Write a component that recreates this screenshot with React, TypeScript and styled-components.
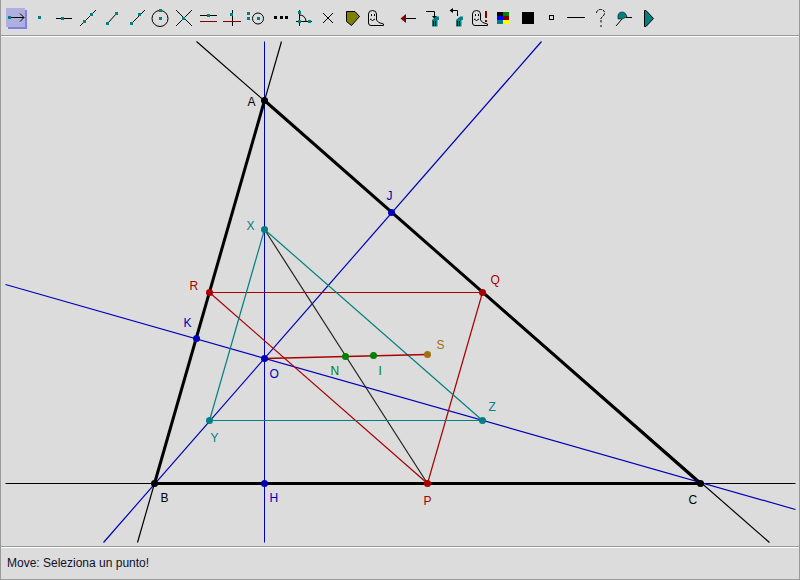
import styled, { createGlobalStyle } from "styled-components";
import { ReactNode } from "react";

const Teal = "#008080";
const Wine = "#800000";
const Blue = "#0000b8";
const Red = "#a80000";
const Green = "#008000";
const Brown = "#a07010";

const GlobalStyle = createGlobalStyle`
  html, body {
    margin: 0;
    padding: 0;
    background: #dcdcdc;
  }
  body {
    font-family: "Liberation Sans", Arial, sans-serif;
  }
`;

const Page = styled.div`
  width: 800px;
  height: 580px;
  box-sizing: border-box;
  display: flex;
  flex-direction: column;
  background: #dcdcdc;
  border-left: 1px solid #999;
  border-right: 1px solid #999;
  overflow: hidden;
`;

const Toolbar = styled.div`
  height: 36px;
  flex: none;
  display: flex;
  padding: 6px 0 0 3px;
  box-sizing: border-box;
  border-bottom: 1px solid #999;
  box-shadow: 0 1px 0 #fff;
`;

const Tool = styled.div<{ $active?: boolean; $gap?: boolean }>`
  width: 19px;
  height: 19px;
  margin: 2px 3px 3px 2px;
  margin-left: ${(p) => (p.$gap ? "10px" : "2px")};
  flex: none;
  background: ${(p) => (p.$active ? "#b0b0e0" : "transparent")};
  box-shadow: ${(p) => (p.$active ? "2px 2px 0 #8080e0" : "none")};

  svg {
    display: block;
    margin: -2px;
    overflow: visible;
  }
`;

const Canvas = styled.svg`
  display: block;
  flex: none;
  margin-top: 1px;
  width: 798px;
  height: 509px;
`;

const Label = styled.text`
  font-family: "Liberation Sans", Arial, sans-serif;
  font-size: 12px;
`;

const StatusBar = styled.div`
  flex: 1;
  display: flex;
  align-items: center;
  padding-left: 6px;
  font-size: 12px;
  color: #10102a;
  border-top: 1px solid #999;
  border-bottom: 1px solid #999;
  box-shadow: inset 0 1px 0 #fff;
`;

function Sq({ x, y, s = 3, c = Teal }: { x: number; y: number; s?: number; c?: string }) {
  return <rect x={x - s / 2} y={y - s / 2} width={s} height={s} fill={c} shapeRendering="crispEdges" />;
}

function Ln({ d, c = "#000" }: { d: string; c?: string }) {
  return <path d={d} fill="none" stroke={c} strokeWidth={1} />;
}

function Ghost() {
  return (
    <>
      <path d="M4.500 17V8Q4.500 4.500 8.500 4.500Q12.500 4.500 12.500 8V14Q13.500 17 19.500 18V19.500H7Q4.500 19.500 4.500 17Z" fill="none" stroke="#000" />
      <rect x="7" y="8" width="1" height="2" fill="#000" />
      <rect x="10" y="8" width="1" height="2" fill="#000" />
      <path d="M6 13Q8.500 16 11 13" fill="none" stroke="#000" />
    </>
  );
}

function Trash({ x }: { x: number }) {
  return (
    <>
      <path d={`M${x} 14L${x + 4} 10.500H${x + 7}V14H${x + 5.500}V20.500H${x}Z`} fill={Teal} />
      <Ln d={`M${x + 1.500} 15V20M${x + 3.500} 15V20`} />
    </>
  );
}

const icons: ReactNode[] = [
  <>
    <Ln d="M5 11.500H20M16 7.500L20 11.500L16 15.500" />
    <Sq x={5.500} y={11.500} />
  </>,
  <Sq x={11.500} y={11.500} />,
  <>
    <Ln d="M4 12.500H20" />
    <Sq x={10.500} y={12.500} />
  </>,
  <>
    <Ln d="M4 20L20 4" />
    <Sq x={8.500} y={15.500} />
    <Sq x={15.500} y={8.500} />
  </>,
  <>
    <Ln d="M7 18L17 7" />
    <Sq x={7.500} y={17.500} />
    <Sq x={16.500} y={7.500} />
  </>,
  <>
    <Ln d="M7 18L21 4" />
    <Sq x={7.500} y={17.500} />
    <Sq x={15.500} y={8.500} />
  </>,
  <>
    <circle cx="12" cy="12.500" r="8" fill="none" stroke="#000" />
    <Sq x={12} y={4.500} />
    <Sq x={12} y={12.500} />
  </>,
  <>
    <Ln d="M4 4L20 20M20 4L4 20" />
    <Sq x={11.500} y={12.500} />
  </>,
  <>
    <Ln d="M4 9.500H21" />
    <Ln d="M4 15.500H21" c={Wine} />
    <Sq x={12.500} y={9.500} />
  </>,
  <>
    <Ln d="M12.500 4V20" />
    <Ln d="M3 15.500H21" c={Wine} />
    <Sq x={11.500} y={8.500} />
  </>,
  <>
    <circle cx="14" cy="12.500" r="5.500" fill="none" stroke="#000" />
    <Sq x={4.500} y={7.500} />
    <Sq x={4.500} y={12.500} />
    <Sq x={14} y={12.500} />
  </>,
  <>
    <Sq x={7} y={11.500} s={3} c="#000" />
    <Sq x={13} y={11.500} s={3} c="#000" />
    <Sq x={18.500} y={11.500} s={3} c="#000" />
  </>,
  <>
    <Ln d="M7.500 4V20M4 15.500H20M7.500 9Q13 9 14 15" />
    <Sq x={7.500} y={6.500} />
    <Sq x={7.500} y={15.500} />
    <Sq x={17.500} y={15.500} />
  </>,
  <Ln d="M7 7L17 17M17 7L7 17" />,
  <path d="M6.500 5.500H15L19.500 10.500L11.500 19.500L6.500 15.500Z" fill="#808000" stroke="#000" />,
  <Ghost />,
  <>
    <Ln d="M9 12.500H20" />
    <path d="M4.500 12.500L10 8V17Z" fill={Wine} />
  </>,
  <>
    <Ln d="M6 5.500H14.500V10" />
    <path d="M12 10H17L14.500 13Z" fill="#000" />
    <Trash x={12} />
  </>,
  <>
    <Ln d="M8 4.500H13.500V10" />
    <path d="M9 2L5.500 4.500L9 7Z" fill="#000" />
    <Trash x={12} />
  </>,
  <>
    <Ghost />
    <rect x="17" y="5" width="2" height="7" fill={Wine} />
    <rect x="17" y="14" width="2" height="2" fill={Wine} />
  </>,
  <g shapeRendering="crispEdges">
    <rect x="5" y="6" width="6" height="4" fill="#000" />
    <rect x="11" y="6" width="6" height="4" fill={Green} />
    <rect x="5" y="10" width="6" height="4" fill="#0000ff" />
    <rect x="11" y="10" width="6" height="4" fill={Wine} />
    <rect x="5" y="14" width="6" height="4" fill={Teal} />
    <rect x="11" y="14" width="6" height="4" fill="#ffff00" />
  </g>,
  <rect x="6" y="6" width="12" height="12" fill="#000" />,
  <rect x="9.500" y="9.500" width="4" height="4" fill="none" stroke="#000" />,
  <Ln d="M3 11.500H21" />,
  <>
    <path d="M8.500 7Q9 3.500 12.500 3.500Q16.500 3.500 16.500 7Q16.500 9.500 13 12V16.500" fill="none" stroke="#000" strokeDasharray="3 1" />
    <rect x="12.500" y="19" width="1" height="2" fill="#000" />
  </>,
  <>
    <path d="M6 13Q5 6 10 6Q14 6 15 11L10 13Z" fill={Teal} stroke="#000" strokeWidth={0.5} />
    <Ln d="M14 11.500H20M4 20L10 13" />
  </>,
  <path d="M8.500 4.500V20.500H10L17.500 12.500L10 4.500Z" fill={Teal} stroke="#000" />,
];

type Pt = { name: string; x: number; y: number; c: string; lx: number; ly: number };

const points: Pt[] = [
  { name: "A", x: 264, y: 100, c: "#000", lx: 247, ly: 105 },
  { name: "B", x: 154, y: 483, c: "#000", lx: 160, ly: 501 },
  { name: "C", x: 700, y: 483, c: "#000", lx: 688, ly: 503 },
  { name: "H", x: 264, y: 483, c: Blue, lx: 269, ly: 501 },
  { name: "J", x: 391, y: 212, c: Blue, lx: 386, ly: 199 },
  { name: "K", x: 196, y: 338, c: Blue, lx: 183, ly: 326 },
  { name: "O", x: 264, y: 358, c: Blue, lx: 269, ly: 377 },
  { name: "R", x: 209, y: 292, c: Red, lx: 189, ly: 289 },
  { name: "Q", x: 482, y: 292, c: Red, lx: 490, ly: 283 },
  { name: "P", x: 427, y: 483, c: Red, lx: 423, ly: 504 },
  { name: "X", x: 264, y: 229, c: Teal, lx: 246, ly: 229 },
  { name: "Y", x: 209, y: 420, c: Teal, lx: 210, ly: 441 },
  { name: "Z", x: 482, y: 420, c: Teal, lx: 488, ly: 410 },
  { name: "N", x: 345, y: 356, c: Green, lx: 330, ly: 374 },
  { name: "I", x: 373, y: 355, c: Green, lx: 378, ly: 374 },
  { name: "S", x: 427, y: 354, c: Brown, lx: 436, ly: 348 },
];

const lines: { a: [number, number]; b: [number, number]; c: string; w?: number }[] = [
  { a: [196, 41], b: [769, 542], c: "#000", w: 1.200 },
  { a: [281, 41], b: [137, 542], c: "#000", w: 1.200 },
  { a: [5, 483], b: [795, 483], c: "#000" },
  { a: [264, 41], b: [264, 542], c: Blue },
  { a: [541, 41], b: [103, 542], c: Blue, w: 1.200 },
  { a: [5, 284], b: [795, 509], c: Blue, w: 1.200 },
  { a: [264, 229], b: [427, 483], c: "#222", w: 1.200 },
  { a: [209, 292], b: [482, 292], c: Red },
  { a: [482, 292], b: [427, 483], c: Red, w: 1.200 },
  { a: [427, 483], b: [209, 292], c: Red, w: 1.200 },
  { a: [264, 229], b: [209, 420], c: Teal, w: 1.200 },
  { a: [209, 420], b: [482, 420], c: Teal },
  { a: [482, 420], b: [264, 229], c: Teal, w: 1.200 },
  { a: [264, 358], b: [427, 354], c: Red, w: 1.500 },
  { a: [264, 100], b: [154, 483], c: "#000", w: 3 },
  { a: [154, 483], b: [700, 483], c: "#000", w: 3 },
  { a: [700, 483], b: [264, 100], c: "#000", w: 3 },
];

export default function App() {
  return (
    <>
      <GlobalStyle />
      <Page>
        <Toolbar>
          {icons.map((icon, i) => (
            <Tool key={i} $active={i === 0} $gap={i === 16}>
              <svg width="24" height="24" viewBox="0 0 24 24">
                {icon}
              </svg>
            </Tool>
          ))}
        </Toolbar>
        <Canvas viewBox="0.500 36.500 798 509">
          {lines.map((l, i) => (
            <line key={i} x1={l.a[0]} y1={l.a[1]} x2={l.b[0]} y2={l.b[1]} stroke={l.c} strokeWidth={l.w ?? 1} />
          ))}
          {points.map((p) => (
            <g key={p.name}>
              <circle cx={p.x} cy={p.y} r={3.500} fill={p.c} />
              <Label x={p.lx} y={p.ly} fill={p.c}>
                {p.name}
              </Label>
            </g>
          ))}
        </Canvas>
        <StatusBar>Move: Seleziona un punto!</StatusBar>
      </Page>
    </>
  );
}
